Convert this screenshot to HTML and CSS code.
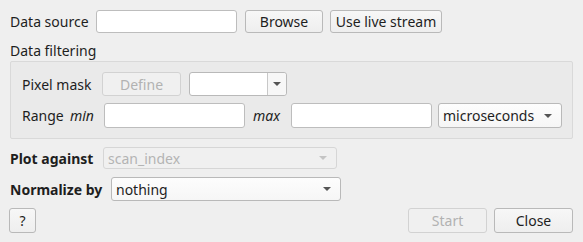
FILE: index.html
```html
<!DOCTYPE html>
<html>
<head>
<meta charset="utf-8">
<link rel="stylesheet" href="styles.css">
</head>
<body>
<div class="dialog">
  <div class="row r-source">
    <span class="lbl w-source">Data source</span>
    <div class="field w141"></div>
    <button class="btn w-browse">Browse</button>
    <button class="btn w-live">Use live stream</button>
  </div>
  <div class="section-title">Data filtering</div>
  <div class="group">
    <div class="row r-mask">
      <span class="lbl w-mask">Pixel mask</span>
      <button class="btn disabled w-define">Define</button>
      <div class="combo split w-maskcombo"><span class="ctext"></span><span class="arrow-box"><span class="arrow"></span></span></div>
    </div>
    <div class="row r-range">
      <span class="lbl w-range">Range</span>
      <span class="ital w-min">min</span>
      <div class="field w141"></div>
      <span class="ital w-max">max</span>
      <div class="field w141"></div>
      <div class="combo w-unit"><span class="ctext">microseconds</span><span class="arrow"></span></div>
    </div>
  </div>
  <div class="row r-plot">
    <span class="lbl bold w-plot">Plot against</span>
    <div class="combo disabled w-plotcombo"><span class="ctext">scan_index</span><span class="arrow"></span></div>
  </div>
  <div class="row r-norm">
    <span class="lbl bold w-norm">Normalize by</span>
    <div class="combo w-normcombo"><span class="ctext">nothing</span><span class="arrow"></span></div>
  </div>
  <div class="row r-buttons">
    <button class="btn w-help">?</button>
    <div class="spacer"></div>
    <button class="btn disabled w-start">Start</button>
    <button class="btn w-close">Close</button>
  </div>
</div>
</body>
</html>
```
FILE: styles.css
```css
html, body {
  margin: 0;
  padding: 0;
  background: #efefef;
}
body {
  width: 583px;
  height: 242px;
  overflow: hidden;
  font-family: "Noto Sans", "DejaVu Sans", sans-serif;
  font-size: 14px;
  color: #1e1e1e;
}
.dialog {
  padding: 10px 10px 0 10px;
}
.row {
  display: flex;
  align-items: center;
}
.lbl, .ital {
  white-space: nowrap;
  flex: none;
}
.ital { font-style: italic; }
.bold { font-weight: bold; }

.field {
  flex: none;
  background: #ffffff;
  border: 1px solid #bdbdbd;
  border-radius: 3px;
  box-sizing: border-box;
  height: 100%;
}
.w141 { width: 141px; }

.btn {
  flex: none;
  box-sizing: border-box;
  height: 100%;
  margin: 0;
  padding: 0;
  font: inherit;
  color: #1e1e1e;
  background: linear-gradient(#f7f7f7, #eeeeee);
  border: 1px solid #b9b9b9;
  border-radius: 3px;
  text-align: center;
}
.btn.disabled {
  color: #b2b2b2;
  border-color: #d2d2d2;
  background: #f0f0f0;
}

.combo {
  flex: none;
  box-sizing: border-box;
  height: 100%;
  display: flex;
  align-items: center;
  background: linear-gradient(#fdfdfd, #f6f6f6);
  border: 1px solid #b9b9b9;
  border-radius: 3px;
  padding: 0 9px 0 4px;
}
.combo .ctext { flex: 1; white-space: nowrap; }
.combo .arrow {
  width: 0; height: 0;
  border-left: 4px solid transparent;
  border-right: 4px solid transparent;
  border-top: 4px solid #555555;
}
.combo.disabled {
  color: #b4b4b4;
  border-color: #d6d6d6;
  background: #f0f0f0;
}
.combo.disabled .arrow { border-top-color: #c4c4c4; }
.combo.split {
  padding: 0;
  background: #ffffff;
}
.combo.split .arrow-box {
  width: 18px;
  height: 100%;
  border-left: 1px solid #c8c8c8;
  display: flex;
  align-items: center;
  justify-content: center;
  background: #f7f7f7;
  border-radius: 0 3px 3px 0;
}

/* row 1 */
.r-source { height: 23px; }
.w-source { width: 86px; }
.w-browse { width: 78px; margin-left: 8px; }
.w-live { width: 112px; margin-left: 7px; }

.section-title {
  height: 20px;
  line-height: 20px;
  margin-top: 8px;
}

.group {
  box-sizing: border-box;
  width: 563px;
  height: 78px;
  margin-top: 0;
  background: #eaeaea;
  border: 1px solid #d9d9d9;
  border-radius: 2px;
  padding: 10px 0 0 11px;
}
.r-mask { height: 24px; }
.w-mask { width: 80px; }
.w-define { width: 79px; }
.w-maskcombo { width: 98px; margin-left: 8px; }
.r-range { height: 25px; margin-top: 7px; }
.w-range { width: 48px; }
.w-min { width: 34px; }
.w-max { width: 38px; margin-left: 8px; }
.w-unit { width: 124px; margin-left: 6px; }

.r-plot { height: 22px; margin-top: 8px; }
.w-plot { width: 93px; }
.w-plotcombo { width: 234px; }
.r-norm { height: 24px; margin-top: 8px; }
.w-norm { width: 101px; }
.w-normcombo { width: 230px; }

.r-buttons { height: 25px; margin-top: 7px; margin-left: -1px; }
.spacer { flex: 1; }
.w-help { width: 27px; }
.w-start { width: 79px; }
.w-close { width: 79px; margin-left: 7px; }
```
